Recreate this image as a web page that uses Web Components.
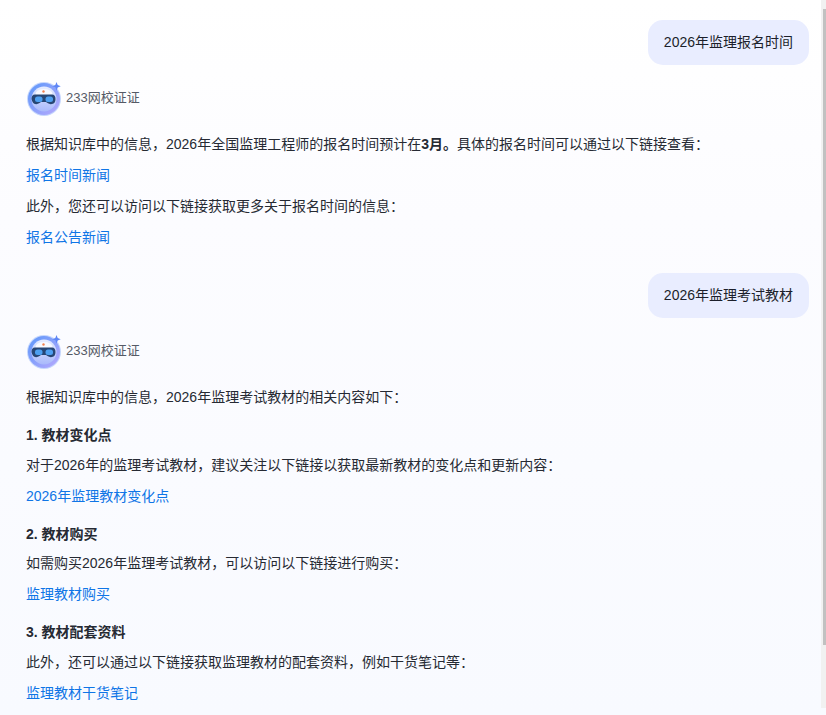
<!DOCTYPE html>
<html>
<head>
<meta charset="utf-8">
<style>
  html, body { margin: 0; height: 100%; overflow: hidden; }
  body { font-family: "Liberation Sans", "Noto Sans CJK SC", sans-serif; }
</style>
</head>
<body>
<template id="chat-page-template">
  <style>
    :host {
      display: block;
      height: 715px;
      box-sizing: border-box;
      padding: 20px 17px 0 26px;
      overflow: hidden;
      position: relative;
      background: linear-gradient(180deg, #ffffff 0%, #fcfcff 30%, #f8faff 100%);
    }
    .track {
      position: absolute; top: 0; right: 0; width: 5px; height: 708px; background: #f1f1f1;
    }
    .thumb {
      position: absolute; top: 9px; right: 0; width: 3px; height: 636px; background: #c1c1c1;
    }
  </style>
  <slot></slot>
  <div class="track"></div>
  <div class="thumb"></div>
</template>

<template id="user-bubble-template">
  <style>
    :host { display: flex; justify-content: flex-end; }
    div {
      background: #e9edff;
      border-radius: 15px;
      padding: 0 16px;
      height: 45px;
      line-height: 44px;
      font-size: 14px;
      color: #1c1f2b;
    }
  </style>
  <div><slot></slot></div>
</template>

<template id="bot-answer-template">
  <style>
    :host { display: block; margin-top: 15px; margin-bottom: 20px; }
    header { display: flex; align-items: flex-start; gap: 3px; height: 36px; margin-bottom: 13px; }
    svg { display: block; }
    span { font-size: 13px; line-height: 18px; margin-top: 9px; color: #555a66; }
    main { font-size: 14px; color: #262a33; line-height: 31px; }
  </style>
  <header>
    <svg width="37" height="36" viewBox="0 0 37 36">
      <defs>
        <linearGradient id="ring" x1="0" y1="0" x2="1" y2="1">
          <stop offset="0" stop-color="#5b97fa"/>
          <stop offset="1" stop-color="#b9aafd"/>
        </linearGradient>
        <linearGradient id="face" x1="0" y1="0" x2="0" y2="1">
          <stop offset="0" stop-color="#e6edff"/>
          <stop offset="1" stop-color="#a9b9fb"/>
        </linearGradient>
      </defs>
      <circle cx="18" cy="19" r="17" fill="#c4d6fd"/>
      <circle cx="18" cy="19" r="16" fill="url(#ring)"/>
      <circle cx="18" cy="19" r="12.500" fill="url(#face)"/>
      <ellipse cx="18" cy="14" rx="8.500" ry="5" fill="#f7f9ff"/>
      <path d="M10 14.500h16q3.500 0 3.500 4.500t-3.500 5q-2.500 .5-4.500-1l-1.500-1h-5l-1.500 1q-2 1.500-4.500 1t-3.500-5q0-4.500 3.500-4.500z" fill="#274674"/>
      <rect x="9" y="16.500" width="7.500" height="5.500" rx="2.500" fill="#4d9ff0"/>
      <rect x="19.500" y="16.500" width="7.500" height="5.500" rx="2.500" fill="#4d9ff0"/>
      <circle cx="17.500" cy="11.500" r="1.200" fill="#f0814f"/>
      <path d="M30.500 2l1.200 3 3 1.200-3 1.200-1.200 3-1.200-3-3-1.200 3-1.200z" fill="#5f86f5"/>
    </svg>
    <span>233网校证证</span>
  </header>
  <main><slot></slot></main>
</template>

<template id="answer-line-template">
  <style>
    :host { display: block; }
    :host([link]) { color: #0f75e6; }
    :host([heading]) { font-weight: bold; margin-top: 8px; line-height: 28.5px; }
  </style>
  <slot></slot>
</template>

<chat-page>
  <user-bubble>2026年监理报名时间</user-bubble>
  <bot-answer>
    <answer-line>根据知识库中的信息，2026年全国监理工程师的报名时间预计在<b>3月。</b>具体的报名时间可以通过以下链接查看：</answer-line>
    <answer-line link>报名时间新闻</answer-line>
    <answer-line>此外，您还可以访问以下链接获取更多关于报名时间的信息：</answer-line>
    <answer-line link>报名公告新闻</answer-line>
  </bot-answer>
  <user-bubble>2026年监理考试教材</user-bubble>
  <bot-answer>
    <answer-line>根据知识库中的信息，2026年监理考试教材的相关内容如下：</answer-line>
    <answer-line heading>1. 教材变化点</answer-line>
    <answer-line>对于2026年的监理考试教材，建议关注以下链接以获取最新教材的变化点和更新内容：</answer-line>
    <answer-line link>2026年监理教材变化点</answer-line>
    <answer-line heading>2. 教材购买</answer-line>
    <answer-line>如需购买2026年监理考试教材，可以访问以下链接进行购买：</answer-line>
    <answer-line link>监理教材购买</answer-line>
    <answer-line heading>3. 教材配套资料</answer-line>
    <answer-line>此外，还可以通过以下链接获取监理教材的配套资料，例如干货笔记等：</answer-line>
    <answer-line link>监理教材干货笔记</answer-line>
  </bot-answer>
</chat-page>

<script>
  class TemplatedElement extends HTMLElement {
    constructor (templateId) {
      super()
      let shadow = this.attachShadow({ mode: 'open' })
      let template = document.querySelector(templateId)
      shadow.appendChild(template.content.cloneNode(true))
    }
  }
  class ChatPage extends TemplatedElement { constructor () { super('#chat-page-template') } }
  class UserBubble extends TemplatedElement { constructor () { super('#user-bubble-template') } }
  class BotAnswer extends TemplatedElement { constructor () { super('#bot-answer-template') } }
  class AnswerLine extends TemplatedElement { constructor () { super('#answer-line-template') } }
  window.customElements.define('chat-page', ChatPage)
  window.customElements.define('user-bubble', UserBubble)
  window.customElements.define('bot-answer', BotAnswer)
  window.customElements.define('answer-line', AnswerLine)
</script>
</body>
</html>
